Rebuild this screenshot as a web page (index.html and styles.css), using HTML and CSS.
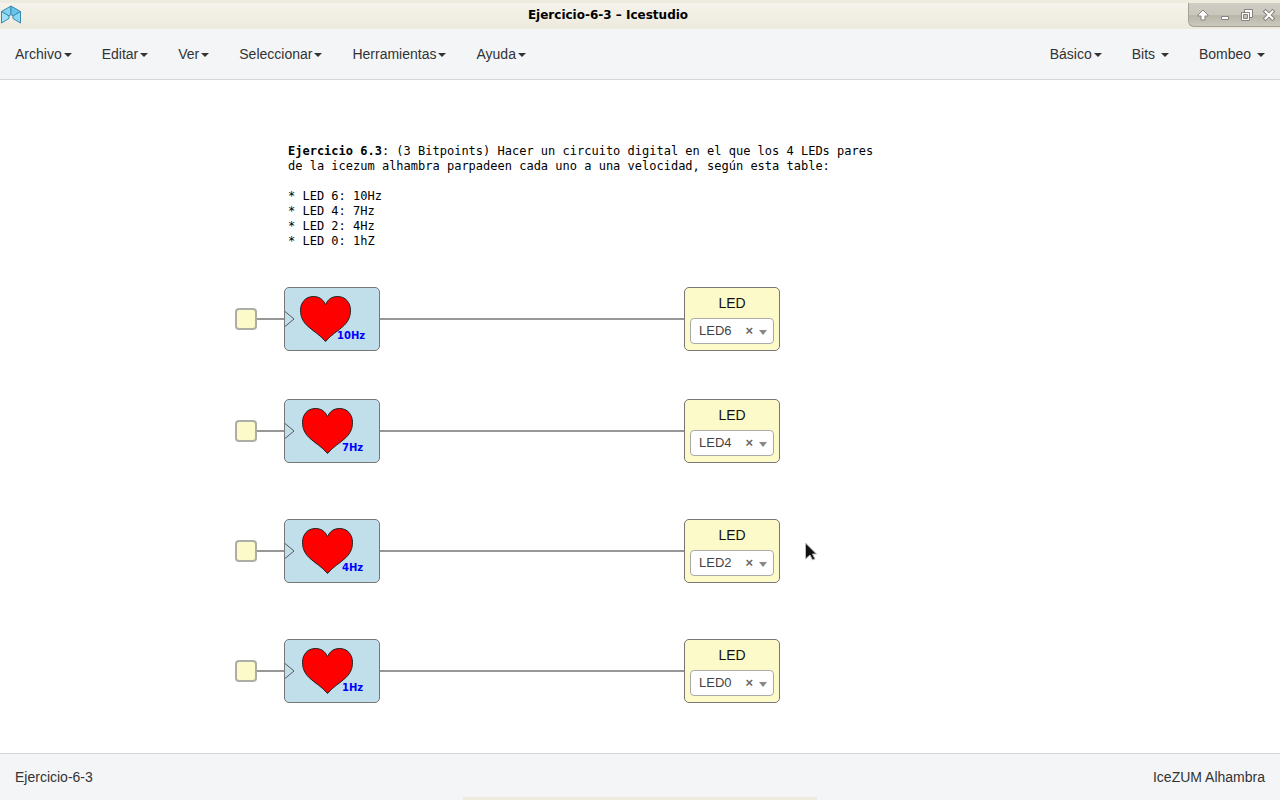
FILE: index.html
```html
<!DOCTYPE html>
<html lang="es">
<head>
<meta charset="utf-8">
<title>Ejercicio-6-3 – Icestudio</title>
<link rel="stylesheet" href="styles.css">
</head>
<body>
<svg class="defs" aria-hidden="true">
  <symbol id="heart" viewBox="0 0 52 48">
    <path d="M26 10C28 4 33 1.500 38 1.500C46 1.500 51 7.500 51 15.500C51 21 49 26 45 30C39 36 31 40 26 46.500C21 40 13 36 7 30C3 26 1 21 1 15.500C1 7.500 6 1.500 14 1.500C19 1.500 24 4 26 10Z" fill="#f00" stroke="#222"/>
  </symbol>
  <symbol id="clock" viewBox="0 0 10 16">
    <path d="M0 0.500L9 8L0 15.500" fill="none" stroke="#555"/>
  </symbol>
</svg>
<header class="titlebar">
  <svg class="app-icon" viewBox="0 0 22 20" aria-hidden="true">
    <g stroke="#3a89ab" stroke-linejoin="round">
      <path d="M1.500 6.500L11 1V9.500L9 11Z" fill="#83d2f0"/>
      <path d="M20.500 6.500L11 1V9.500L13 11Z" fill="#69c4ec"/>
      <path d="M1.500 6.500L9 11V13.500L1.500 18Z" fill="#9be1f7"/>
      <path d="M20.500 6.500L13 11V13.500L20.500 18Z" fill="#86d8f3"/>
    </g>
  </svg>
  <h1 class="title">Ejercicio-6-3 – Icestudio</h1>
  <div class="window-buttons">
    <button aria-label="Enrollar"><svg viewBox="0 0 14 14"><path d="M7 2L12 7V8H9V12H5V8H2V7Z" fill="#fff" stroke="#85837b"/></svg></button>
    <button aria-label="Minimizar"><svg viewBox="0 0 14 14"><path d="M3.500 8.500H10.500V11.500H3.500Z" fill="#fff" stroke="#85837b"/></svg></button>
    <button aria-label="Restaurar"><svg viewBox="0 0 14 14"><path d="M4.500 1.500H12.500V9.500H4.500Z" fill="#fff" stroke="#85837b"/><path d="M1.500 4.500H9.500V12.500H1.500Z" fill="#fff" stroke="#85837b"/><path d="M3.500 6.500H7.500V10.500H3.500Z" fill="#c5c2b7" stroke="#85837b"/></svg></button>
    <button aria-label="Cerrar"><svg viewBox="0 0 14 14"><path d="M3.500 3.500L10.500 10.500M10.500 3.500L3.500 10.500" fill="none" stroke="#85837b" stroke-width="4" stroke-linecap="square"/><path d="M3.500 3.500L10.500 10.500M10.500 3.500L3.500 10.500" fill="none" stroke="#fff" stroke-width="2" stroke-linecap="square"/></svg></button>
  </div>
</header>
<nav class="navbar">
  <div class="menus">
    <button>Archivo<span class="caret"></span></button>
    <button>Editar<span class="caret"></span></button>
    <button>Ver<span class="caret"></span></button>
    <button>Seleccionar<span class="caret"></span></button>
    <button>Herramientas<span class="caret"></span></button>
    <button>Ayuda<span class="caret"></span></button>
  </div>
  <div class="menus">
    <button>Básico<span class="caret"></span></button>
    <button>Bits <span class="caret"></span></button>
    <button>Bombeo <span class="caret"></span></button>
  </div>
</nav>
<main class="canvas">
  <div class="note">
    <div><b>Ejercicio 6.3</b><span>: (3 Bitpoints) Hacer un circuito digital en el que los 4 LEDs pares</span></div>
    <div>de la icezum alhambra parpadeen cada uno a una velocidad, según esta table:</div>
    <div class="list">* LED 6: 10Hz</div>
    <div>* LED 4: 7Hz</div>
    <div>* LED 2: 4Hz</div>
    <div>* LED 0: 1hZ</div>
  </div>

  <section class="circuit row-1">
    <span class="port"></span><span class="wire wire-in"></span>
    <div class="block">
      <svg class="clock"><use href="#clock"/></svg>
      <svg class="art" viewBox="0 0 96 64"><use href="#heart" x="15.500" y="8" width="52" height="48"/><text x="53" y="52">10Hz</text></svg>
    </div>
    <span class="wire wire-out"></span>
    <div class="led"><label for="led6">LED</label>
      <div class="picker"><select id="led6"><option>LED6</option></select><button aria-label="Quitar">×</button><span class="arrow"></span></div>
    </div>
  </section>
  <section class="circuit row-2">
    <span class="port"></span><span class="wire wire-in"></span>
    <div class="block">
      <svg class="clock"><use href="#clock"/></svg>
      <svg class="art" viewBox="0 0 96 64"><use href="#heart" x="17.500" y="8" width="52" height="48"/><text x="58" y="52">7Hz</text></svg>
    </div>
    <span class="wire wire-out"></span>
    <div class="led"><label for="led4">LED</label>
      <div class="picker"><select id="led4"><option>LED4</option></select><button aria-label="Quitar">×</button><span class="arrow"></span></div>
    </div>
  </section>
  <section class="circuit row-3">
    <span class="port"></span><span class="wire wire-in"></span>
    <div class="block">
      <svg class="clock"><use href="#clock"/></svg>
      <svg class="art" viewBox="0 0 96 64"><use href="#heart" x="17.500" y="8" width="52" height="48"/><text x="58" y="52">4Hz</text></svg>
    </div>
    <span class="wire wire-out"></span>
    <div class="led"><label for="led2">LED</label>
      <div class="picker"><select id="led2"><option>LED2</option></select><button aria-label="Quitar">×</button><span class="arrow"></span></div>
    </div>
  </section>
  <section class="circuit row-4">
    <span class="port"></span><span class="wire wire-in"></span>
    <div class="block">
      <svg class="clock"><use href="#clock"/></svg>
      <svg class="art" viewBox="0 0 96 64"><use href="#heart" x="17.500" y="8" width="52" height="48"/><text x="58" y="52">1Hz</text></svg>
    </div>
    <span class="wire wire-out"></span>
    <div class="led"><label for="led0">LED</label>
      <div class="picker"><select id="led0"><option>LED0</option></select><button aria-label="Quitar">×</button><span class="arrow"></span></div>
    </div>
  </section>

  <svg class="pointer" viewBox="0 0 14 20" aria-hidden="true"><path d="M1.500 1L12.500 12H8.500L11 17L8.500 18L6 13L1.500 17Z" fill="#111" stroke="#bbb"/></svg>
</main>
<footer class="statusbar">
  <span>Ejercicio-6-3</span>
  <span>IceZUM Alhambra</span>
  <i class="edge"></i>
</footer>
</body>
</html>
```

FILE: styles.css
```css
* { box-sizing: border-box; }

body {
  margin: 0;
  min-height: 100vh;
  display: flex;
  flex-direction: column;
  background: #fff;
  color: #333;
  font: 14px/20px "Liberation Sans", Arial, sans-serif;
}

button, select {
  margin: 0;
  padding: 0;
  border: 0;
  background: none;
  color: inherit;
  font: inherit;
}

.defs { position: absolute; width: 0; height: 0; }

/* Window title */
.titlebar {
  display: flex;
  height: 29px;
  padding-top: 3px;
  background: linear-gradient(#f5f3eb, #ece8db) 0 3px no-repeat #edeade;
}
.app-icon { width: 22px; height: 20px; margin: 2px 6px 0 0; }
.title {
  flex: 1;
  margin: 0;
  color: #000;
  text-align: center;
  font: bold 12px/24px "DejaVu Sans", sans-serif;
}
.window-buttons {
  display: flex;
  gap: 8px;
  height: 24px;
  padding: 0 4px 0 7px;
  border: solid #a3a095;
  border-width: 0 0 1px 1px;
  border-bottom-left-radius: 6px;
  background: linear-gradient(#d0cdc4, #c9c6bc 50%, #b8b5a9 55%, #cbc8be);
}
.window-buttons button { display: flex; align-items: center; }
.window-buttons svg { width: 14px; height: 14px; }

/* Menus */
.navbar {
  display: flex;
  justify-content: space-between;
  height: 51px;
  border-bottom: 1px solid #d3d7db;
  background: #f4f5f7;
}
.menus { display: flex; }
.menus button { padding: 0 15px; white-space: pre; }
.caret {
  display: inline-block;
  margin-left: 2px;
  vertical-align: middle;
  border: 4px solid transparent;
  border-top-color: #333;
  border-bottom: 0;
}

/* Diagram */
.canvas { position: relative; flex: 1; min-height: 640px; overflow: hidden; }
.note {
  position: absolute;
  left: 288px;
  top: 64px;
  color: #000;
  white-space: nowrap;
  font: 12px/15px "DejaVu Sans Mono", monospace;
}
.list { margin-top: 15px; }
.circuit { position: absolute; left: 235px; display: flex; align-items: center; height: 64px; }
.row-1 { top: 207px; }
.row-2 { top: 319px; }
.row-3 { top: 439px; }
.row-4 { top: 559px; }

.port {
  width: 22px;
  height: 22px;
  border: 2px solid #adada5;
  border-radius: 4px;
  background: #fcfac9;
}
.wire { height: 2px; background: #979797; }
.wire-in { width: 27px; }
.wire-out { width: 304px; }

.block, .led {
  width: 96px;
  height: 64px;
  border: 1px solid #777;
  border-radius: 5px;
}
.block { position: relative; background: #c0dfeb; }
.clock { position: absolute; left: 0; top: 23px; width: 10px; height: 16px; }
.art { position: absolute; left: -1px; top: -1px; width: 96px; height: 64px; }
.art text { fill: #00f; font: bold 10px "DejaVu Sans", sans-serif; }

.led {
  display: flex;
  flex-direction: column;
  gap: 5px;
  padding: 5px;
  background: #fcfac9;
}
.led label { color: #111; text-align: center; }
.picker { position: relative; display: flex; height: 26px; }
.picker select {
  appearance: none;
  width: 100%;
  padding: 0 8px;
  border: 1px solid #aaa;
  border-radius: 4px;
  background: #fff;
  color: #444;
  font-size: 13px;
}
.picker button {
  position: absolute;
  right: 21px;
  top: 4px;
  color: #666;
  font: bold 13px/18px "Liberation Sans", Arial, sans-serif;
}
.arrow {
  position: absolute;
  right: 7px;
  top: 12px;
  border: 4px solid transparent;
  border-top: 5px solid #888;
  border-bottom: 0;
}
.pointer { position: absolute; left: 804px; top: 462px; width: 14px; height: 20px; }

/* Status */
.statusbar {
  position: relative;
  display: flex;
  justify-content: space-between;
  align-items: center;
  height: 47px;
  padding: 0 15px;
  border-top: 1px solid #d3d7db;
  background: #f4f5f7;
}
.edge {
  position: absolute;
  left: 50%;
  bottom: 0;
  width: 354px;
  height: 3px;
  margin-left: -177px;
  background: #eeeadf;
}
```
